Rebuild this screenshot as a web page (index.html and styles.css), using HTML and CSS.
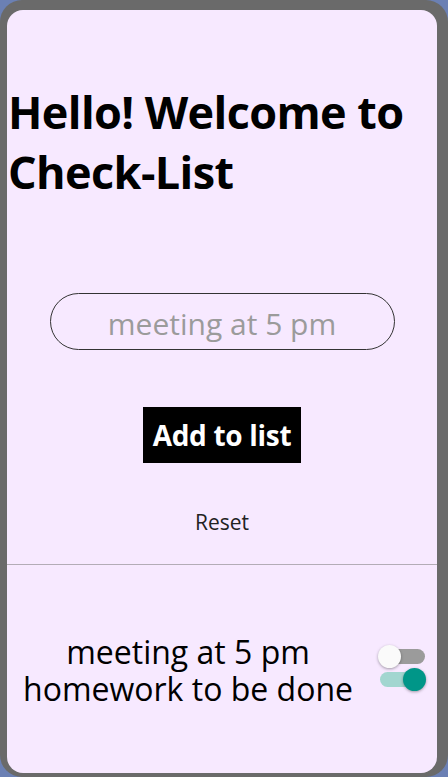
FILE: index.html
```html
<!DOCTYPE html>
<html>
<head>
<meta charset="utf-8">
<link rel="stylesheet" href="styles.css">
</head>
<body>
<div class="frame">
  <div class="card">
    <section class="top">
      <h1 class="title">Hello! Welcome to Check-List</h1>
      <input class="entry" type="text" placeholder="meeting at 5 pm">
      <button class="add">Add to list</button>
      <button class="reset">Reset</button>
    </section>
    <section class="list">
      <div class="items">
        <div class="item">meeting at 5 pm</div>
        <div class="item">homework to be done</div>
      </div>
      <div class="switches">
        <span class="switch"><span class="track"></span><span class="thumb"></span></span>
        <span class="switch on"><span class="track"></span><span class="thumb"></span></span>
      </div>
    </section>
  </div>
</div>
</body>
</html>
```
FILE: styles.css
```css
html, body {
  margin: 0;
  padding: 0;
}
body {
  background: #6b80b4;
  width: 448px;
  height: 777px;
  overflow: hidden;
  font-family: "Open Sans", "Noto Sans", sans-serif;
}
.frame {
  box-sizing: border-box;
  width: 448px;
  height: 777px;
  background: #6a6a6a;
  border-radius: 22px;
  padding: 10px 11px 4px 7px;
}
.card {
  box-sizing: border-box;
  height: 100%;
  background: #f7e9ff;
  border-radius: 16px;
  display: flex;
  flex-direction: column;
  overflow: hidden;
}
.top {
  height: 554px;
  border-bottom: 1px solid #b3acb6;
  display: flex;
  flex-direction: column;
  align-items: center;
}
.title {
  align-self: stretch;
  margin: 72px 0 0 0;
  padding: 0 0 0 1px;
  font-size: 45px;
  line-height: 60px;
  font-weight: 700;
  color: #000;
  letter-spacing: -0.6px;
}
.entry {
  box-sizing: border-box;
  margin-top: 91px;
  width: 345px;
  height: 57px;
  border: 1px solid #333;
  border-radius: 29px;
  background: transparent;
  font-family: inherit;
  font-size: 30px;
  text-align: center;
  color: #222;
  outline: none;
  padding: 4px 0 0;
}
.entry::placeholder {
  color: #9b9b9b;
}
.add {
  margin-top: 57px;
  width: 158px;
  height: 56px;
  background: #000;
  color: #fff;
  border: 0;
  padding: 0;
  font-family: inherit;
  font-size: 28px;
  font-weight: 700;
  letter-spacing: -0.3px;
}
.reset {
  margin-top: 45px;
  background: none;
  border: 0;
  padding: 0;
  font-family: inherit;
  font-size: 21px;
  color: #222;
}
.list {
  flex: 1;
  display: flex;
  align-items: center;
  justify-content: center;
  padding-right: 11px;
}
.items {
  width: 362px;
  text-align: center;
  font-size: 32px;
  line-height: 37px;
  color: #000;
  margin-top: 2px;
}
.switches {
  display: flex;
  flex-direction: column;
  gap: 0;
  margin-left: 9px;
  margin-top: -2px;
}
.switch {
  position: relative;
  display: block;
  width: 48px;
  height: 23px;
}
.track {
  position: absolute;
  left: 2px;
  right: 1px;
  top: 4px;
  height: 15px;
  border-radius: 8px;
  background: #9b9b9b;
}
.thumb {
  position: absolute;
  left: 0;
  top: 0;
  width: 23px;
  height: 23px;
  border-radius: 50%;
  background: #fafafa;
  box-shadow: 0 1px 3px rgba(0,0,0,0.35);
}
.switch.on .track {
  background: #a2d6d0;
}
.switch.on .thumb {
  left: auto;
  right: 0;
  background: #009688;
}
```
